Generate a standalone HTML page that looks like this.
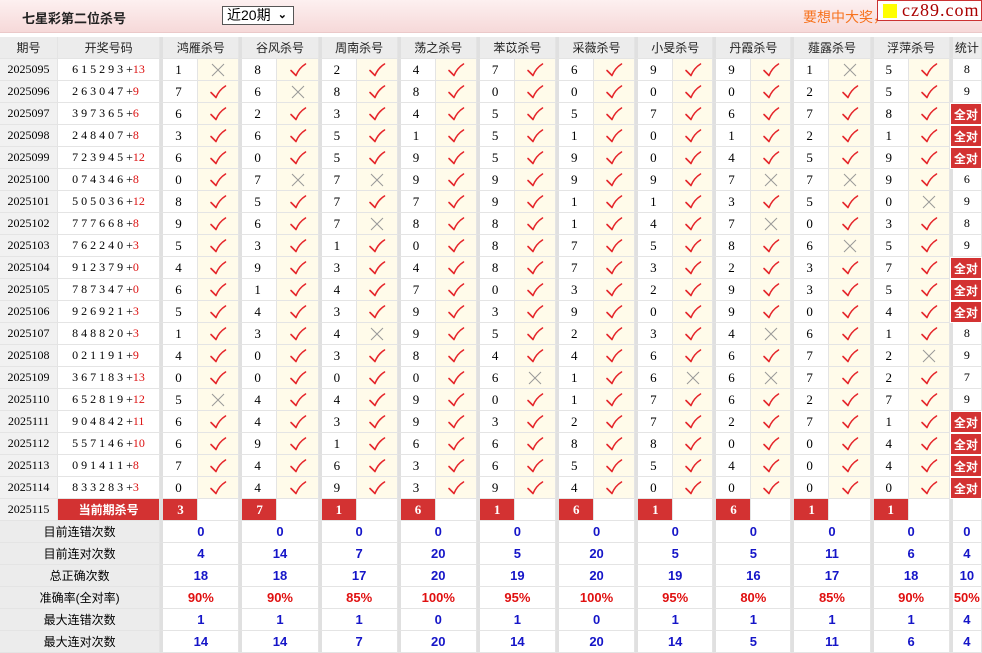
<!DOCTYPE html>
<html><head><meta charset="utf-8"><style>
*{margin:0;padding:0;box-sizing:border-box}
body{width:982px;height:652px;overflow:hidden;background:#fff;font-family:"Liberation Serif","Noto Serif CJK SC",serif;position:relative}
.top{position:absolute;left:0;top:0;width:982px;height:33px;background:linear-gradient(#fdf0f0,#f6d9d9);border-bottom:1px solid #ebc9c9}
.title{position:absolute;left:22px;top:8px;font:bold 13px "Liberation Sans","Noto Sans CJK SC",sans-serif;color:#222}
.sel{position:absolute;left:222px;top:6px;width:72px;height:19px;border:1px solid #555;background:#fff;font:14px "Liberation Sans","Noto Sans CJK SC",sans-serif;padding-left:4px;line-height:17px}
.sel b{position:absolute;right:6px;top:0;font-size:11px}
.ad{position:absolute;left:803px;top:7px;color:#f7731e;font:14px "Liberation Sans","Noto Sans CJK SC",sans-serif}
.logo{position:absolute;left:877px;top:0;width:105px;height:21px;background:#fff;border:1px solid #c33;font:18px "Liberation Serif",serif;color:#a00;line-height:19px;padding-left:24px;letter-spacing:1px}
.logo i{position:absolute;left:5px;top:3px;width:14px;height:14px;background:#ff0}
table{position:absolute;left:0;top:37px;border-collapse:separate;border-spacing:0;table-layout:fixed;width:982px}
td,th{height:22px;border-bottom:1px solid #e4e4e4;border-right:1px solid #e4e4e4;text-align:center;font-size:12px;padding:0;white-space:nowrap;overflow:hidden}
th{background:#ececec;font:normal 12px "Liberation Sans","Noto Sans CJK SC",sans-serif;color:#222}
td.q{background:#f1f1f1;font-size:12px}
td.k{text-align:left;padding-left:14px;font-size:12px}
td.k span{color:#d11}
.g{border-left:3px solid #e0e0e0}
td.n{text-align:left;padding-left:12px;font-size:13px}
td.c{background:#fffbea}
svg{display:block;margin:0 auto}
td.f{background:#d33232;color:#fff;font:bold 12px "Liberation Sans","Noto Sans CJK SC",sans-serif;border:1px solid #fff}
td.r{background:#d33232;color:#fff;font:bold 13px "Liberation Serif",serif;text-align:left;padding-left:14px}
td.cur{background:#d33232;color:#fff;font:bold 12px "Liberation Sans","Noto Sans CJK SC",sans-serif}
td.l{background:#ececec;font:12px "Liberation Sans","Noto Sans CJK SC",sans-serif}
td.s{font:bold 13px "Liberation Sans",sans-serif;color:#1515c8}
td.p{font:bold 13px "Liberation Sans",sans-serif;color:#e01010}
</style></head><body>
<svg width="0" height="0" style="position:absolute"><defs>
<symbol id="v" viewBox="0 0 18 16"><path d="M2 8.5 L7 13.5 Q10 6 16.5 2" fill="none" stroke="#e5262b" stroke-width="1.6" stroke-linecap="round" stroke-linejoin="round"/></symbol>
<symbol id="x" viewBox="0 0 16 16"><path d="M2 2 L14 14 M14 2 L2 14" stroke="#999" stroke-width="1"/></symbol>
</defs></svg>
<div class="top"><div class="title">七星彩第二位杀号</div><div class="sel">近20期<b>&#8964;</b></div><div class="ad">要想中大奖，</div><div class="logo"><i></i>cz89.com</div></div>
<table>
<colgroup><col style="width:58px"><col style="width:102px"><col style="width:38px"><col style="width:41px"><col style="width:38px"><col style="width:41px"><col style="width:38px"><col style="width:41px"><col style="width:38px"><col style="width:41px"><col style="width:38px"><col style="width:41px"><col style="width:38px"><col style="width:41px"><col style="width:38px"><col style="width:40px"><col style="width:38px"><col style="width:40px"><col style="width:38px"><col style="width:41px"><col style="width:38px"><col style="width:41px"><col style="width:32px"></colgroup>
<tr><th>期号</th><th>开奖号码</th><th class="g" colspan="2">鸿雁杀号</th><th class="g" colspan="2">谷风杀号</th><th class="g" colspan="2">周南杀号</th><th class="g" colspan="2">荡之杀号</th><th class="g" colspan="2">苯苡杀号</th><th class="g" colspan="2">采薇杀号</th><th class="g" colspan="2">小旻杀号</th><th class="g" colspan="2">丹霞杀号</th><th class="g" colspan="2">薤露杀号</th><th class="g" colspan="2">浮萍杀号</th><th class="g">统计</th></tr>
<tbody id="b"></tbody>
</table>
<script>
var D=[
["2025095","615293","13","1x8v2v4v7v6v9v9v1x5v","8"],
["2025096","263047","9","7v6x8v8v0v0v0v0v2v5v","9"],
["2025097","397365","6","6v2v3v4v5v5v7v6v7v8v","A"],
["2025098","248407","8","3v6v5v1v5v1v0v1v2v1v","A"],
["2025099","723945","12","6v0v5v9v5v9v0v4v5v9v","A"],
["2025100","074346","8","0v7x7x9v9v9v9v7x7x9v","6"],
["2025101","505036","12","8v5v7v7v9v1v1v3v5v0x","9"],
["2025102","777668","8","9v6v7x8v8v1v4v7x0v3v","8"],
["2025103","762240","3","5v3v1v0v8v7v5v8v6x5v","9"],
["2025104","912379","0","4v9v3v4v8v7v3v2v3v7v","A"],
["2025105","787347","0","6v1v4v7v0v3v2v9v3v5v","A"],
["2025106","926921","3","5v4v3v9v3v9v0v9v0v4v","A"],
["2025107","848820","3","1v3v4x9v5v2v3v4x6v1v","8"],
["2025108","021191","9","4v0v3v8v4v4v6v6v7v2x","9"],
["2025109","367183","13","0v0v0v0v6x1v6x6x7v2v","7"],
["2025110","652819","12","5x4v4v9v0v1v7v6v2v7v","9"],
["2025111","904842","11","6v4v3v9v3v2v7v2v7v1v","A"],
["2025112","557146","10","6v9v1v6v6v8v8v0v0v4v","A"],
["2025113","091411","8","7v4v6v3v6v5v5v4v0v4v","A"],
["2025114","833283","3","0v4v9v3v9v4v0v0v0v0v","A"]];
var h="";
D.forEach(function(r){
h+='<tr><td class="q">'+r[0]+'</td><td class="k">'+r[1].split("").join(" ")+' +<span>'+r[2]+'</span></td>';
for(var i=0;i<10;i++){var n=r[3][i*2],t=r[3][i*2+1];
h+='<td class="n g">'+n+'</td><td class="c">'+(t=="v"?'<svg width="18" height="16"><use href="#v"/></svg>':'<svg width="16" height="16"><use href="#x"/></svg>')+'</td>';}
h+=(r[4]=="A"?'<td class="f g">全对</td>':'<td class="g">'+r[4]+'</td>')+'</tr>';});
var c=[3,7,1,6,1,6,1,6,1,1];
h+='<tr><td class="q">2025115</td><td class="cur">当前期杀号</td>';
c.forEach(function(n){h+='<td class="r g">'+n+'</td><td></td>';});
h+='<td class="g"></td></tr>';
var S=[["目前连错次数","0,0,0,0,0,0,0,0,0,0,0","s"],["目前连对次数","4,14,7,20,5,20,5,5,11,6,4","s"],["总正确次数","18,18,17,20,19,20,19,16,17,18,10","s"],["准确率(全对率)","90%,90%,85%,100%,95%,100%,95%,80%,85%,90%,50%","p"],["最大连错次数","1,1,1,0,1,0,1,1,1,1,4","s"],["最大连对次数","14,14,7,20,14,20,14,5,11,6,4","s"]];
S.forEach(function(s){var v=s[1].split(",");h+='<tr><td class="l" colspan="2">'+s[0]+'</td>';
for(var i=0;i<10;i++)h+='<td class="'+s[2]+' g" colspan="2">'+v[i]+'</td>';
h+='<td class="'+s[2]+' g">'+v[10]+'</td></tr>';});
document.getElementById("b").innerHTML=h;
</script>
</body></html>
